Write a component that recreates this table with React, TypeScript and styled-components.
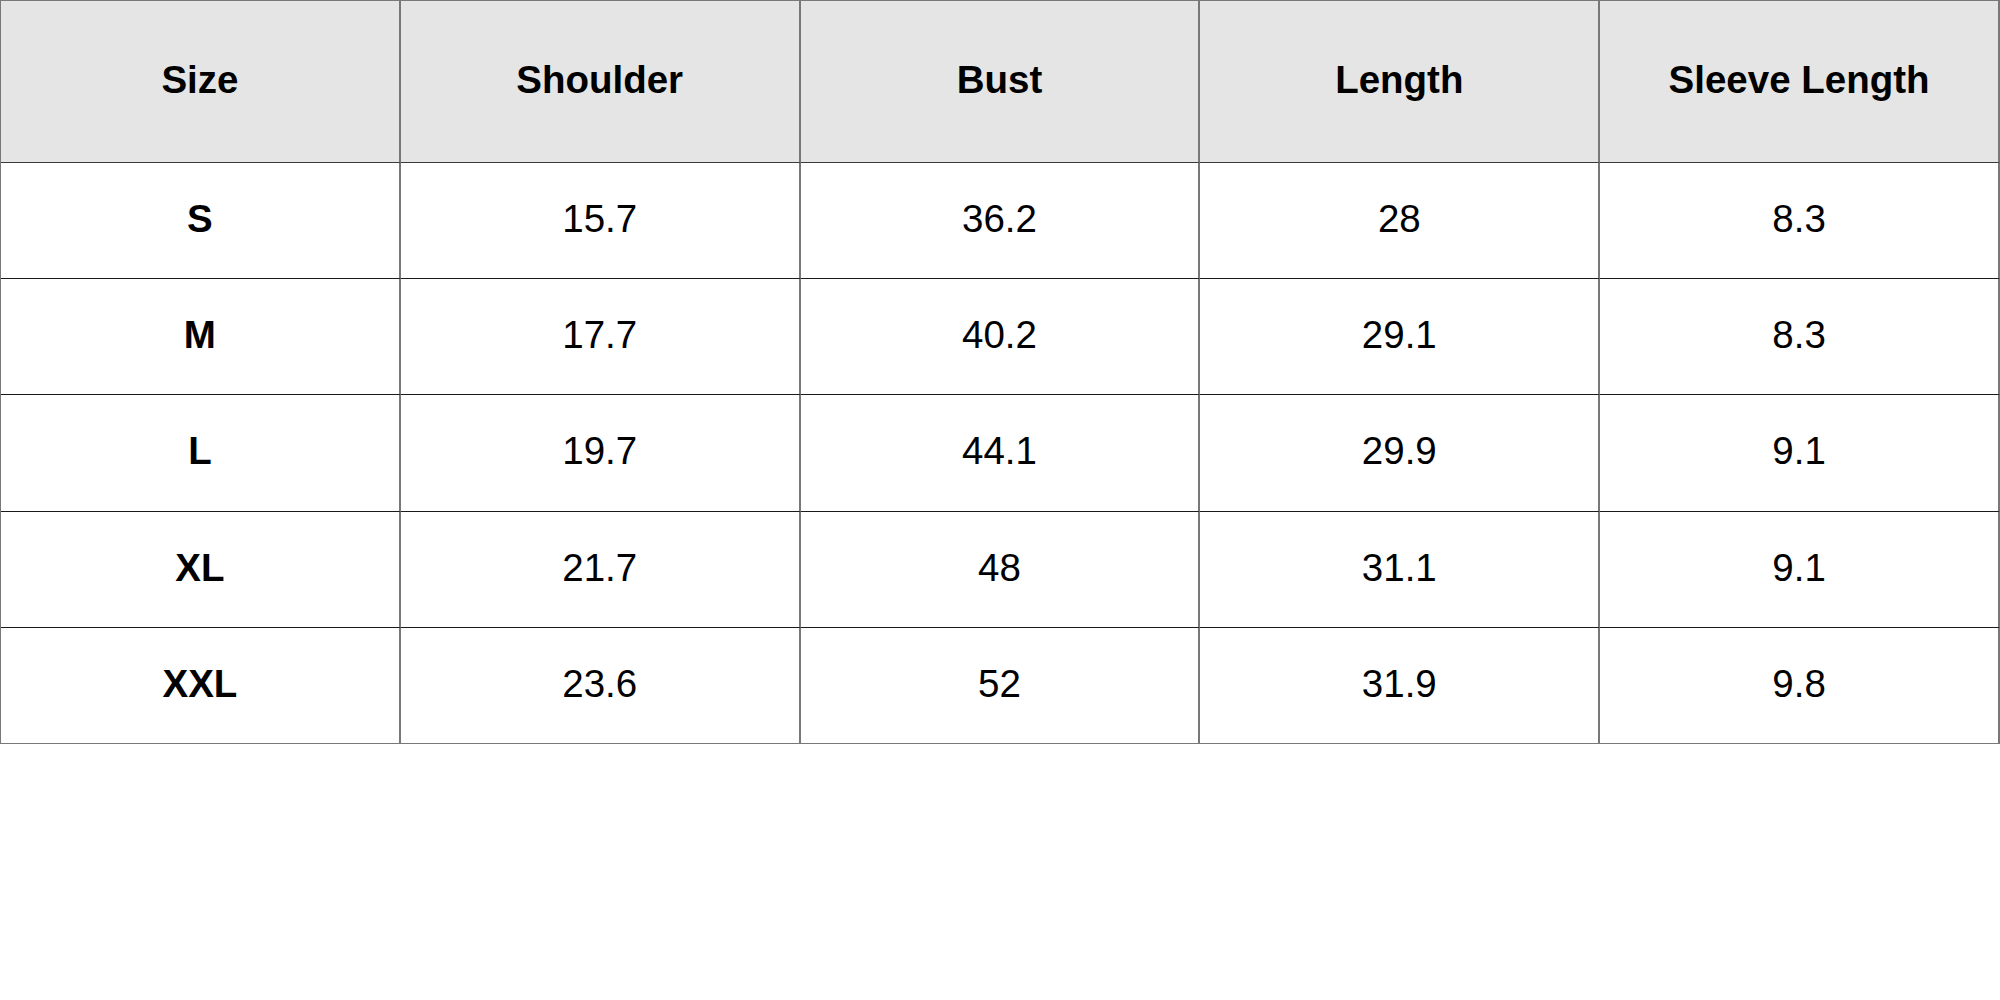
import React from "react";
import styled, { createGlobalStyle } from "styled-components";

const GlobalStyle = createGlobalStyle`
  html, body { margin: 0; padding: 0; background: #ffffff; }
  body { font-family: "Liberation Sans", Arial, sans-serif; }
`;

const Table = styled.table`
  width: 2000px;
  border-collapse: separate;
  border-spacing: 0;
  table-layout: fixed;
  border-left: 1px solid #787878;
  border-top: 1px solid #787878;
  font-family: "Liberation Sans", Arial, sans-serif;
  font-size: 38.5px;
  color: #000;
`;

const Row = styled.tr<{ $h: number }>`
  height: ${(p) => p.$h}px;
`;

const HeadCell = styled.th`
  padding: 0 0 4px;
  background: #e5e5e5;
  font-weight: 700;
  text-align: center;
  vertical-align: middle;
  border-right: 2px solid #787878;
  border-bottom: 1px solid #3a3a3a;
`;

const Cell = styled.td<{ $bold?: boolean; $last?: boolean }>`
  padding: 0 0 4px;
  text-align: center;
  vertical-align: middle;
  font-weight: ${(p) => (p.$bold ? 700 : 400)};
  border-right: 2px solid #787878;
  border-bottom: 1px solid ${(p) => (p.$last ? "#787878" : "#1a1a1a")};
`;

const headers = ["Size", "Shoulder", "Bust", "Length", "Sleeve Length"];
const rows = [
  ["S", "15.7", "36.2", "28", "8.3"],
  ["M", "17.7", "40.2", "29.1", "8.3"],
  ["L", "19.7", "44.1", "29.9", "9.1"],
  ["XL", "21.7", "48", "31.1", "9.1"],
  ["XXL", "23.6", "52", "31.9", "9.8"],
];
const rowHeights = [116, 116, 117, 116, 116];

export default function App() {
  return (
    <>
      <GlobalStyle />
      <Table>
        <thead>
          <Row $h={162}>
            {headers.map((h) => (
              <HeadCell key={h}>{h}</HeadCell>
            ))}
          </Row>
        </thead>
        <tbody>
          {rows.map((r, ri) => (
            <Row key={r[0]} $h={rowHeights[ri]}>
              {r.map((v, ci) => (
                <Cell key={ci} $bold={ci === 0} $last={ri === rows.length - 1}>
                  {v}
                </Cell>
              ))}
            </Row>
          ))}
        </tbody>
      </Table>
    </>
  );
}
